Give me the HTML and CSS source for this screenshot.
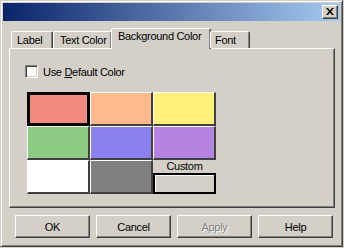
FILE: index.html
```html
<!DOCTYPE html>
<html lang="en">
<head>
    <meta charset="UTF-8">
    <title>Properties</title>
    <link rel="stylesheet" href="styles.css">
</head>
<body>
    <div class="window">
        <div class="titlebar">
            <button class="close-btn" aria-label="Close">
                <svg width="8" height="7" viewBox="0 0 8 7">
                    <path d="M0 0h2l2 2.5L6 0h2L5 3.5 8 7H6L4 4.5 2 7H0l3-3.5z" fill="#000"/>
                </svg>
            </button>
        </div>

        <div class="tabs">
            <div class="tab">Label</div>
            <div class="tab">Text Color</div>
            <div class="tab active">Background Color</div>
            <div class="tab">Font</div>
        </div>

        <div class="panel">
            <label class="check-row">
                <span class="checkbox"></span>
                <span>Use <u>D</u>efault Color</span>
            </label>

            <div class="swatches">
                <div class="swatch selected" style="background:#f28a80"></div>
                <div class="swatch" style="background:#ffb98a"></div>
                <div class="swatch" style="background:#fff07c"></div>
                <div class="swatch" style="background:#8ccc82"></div>
                <div class="swatch" style="background:#8a80f0"></div>
                <div class="swatch" style="background:#b682e2"></div>
                <div class="swatch" style="background:#ffffff"></div>
                <div class="swatch" style="background:#808080"></div>
                <div class="custom">
                    <div class="custom-label">Custom</div>
                    <div class="custom-box"></div>
                </div>
            </div>
        </div>

        <div class="buttons">
            <button class="btn">OK</button>
            <button class="btn">Cancel</button>
            <button class="btn disabled"><u>A</u>pply</button>
            <button class="btn">Help</button>
        </div>
    </div>
</body>
</html>
```

FILE: styles.css
```css
* {
    margin: 0;
    padding: 0;
    box-sizing: border-box;
}

body {
    background: #d4d0c8;
    font-family: "Liberation Sans", Arial, sans-serif;
    font-size: 11px;
    letter-spacing: -0.3px;
    color: #000;
}

.window {
    width: 343px;
    height: 247px;
    background: #d4d0c8;
    border: 1px solid;
    border-color: #d4d0c8 #404040 #404040 #d4d0c8;
    box-shadow: inset 1px 1px #fff, inset -1px -1px #808080;
    padding: 2px;
    display: flex;
    flex-direction: column;
}

.titlebar {
    height: 18px;
    background: linear-gradient(90deg, #0a246a, #a6caf0);
    display: flex;
    justify-content: flex-end;
    align-items: center;
    padding-right: 2px;
}

.close-btn {
    width: 16px;
    height: 14px;
    background: #d4d0c8;
    border: 1px solid;
    border-color: #fff #404040 #404040 #fff;
    box-shadow: inset -1px -1px #808080;
    display: flex;
    align-items: center;
    justify-content: center;
    padding-bottom: 1px;
}

.tabs {
    display: flex;
    align-items: flex-end;
    height: 20px;
    margin-top: 7px;
    padding-left: 8px;
    position: relative;
    z-index: 1;
}

.tab {
    height: 17px;
    padding: 2px 0 0 5px;
    border: 1px solid;
    border-bottom: none;
    border-color: #fff #404040 transparent #fff;
    box-shadow: inset -1px 0 #808080;
    border-radius: 2px 2px 0 0;
    white-space: nowrap;
}

.tab:nth-child(1) { width: 42px; }
.tab:nth-child(2) { width: 59px; padding-left: 6px; }
.tab:nth-child(4) { width: 40px; padding-left: 4px; }

.tab.active {
    height: 21px;
    width: 100px;
    margin: 0 -1px -1px -1px;
    padding: 1px 0 0 6px;
    background: #d4d0c8;
}

.panel {
    margin: 0 5px 0 6px;
    height: 160px;
    border: 1px solid;
    border-color: #fff #404040 #404040 #fff;
    box-shadow: inset -1px -1px #808080;
    padding: 16px 0 0 15px;
}

.check-row {
    display: flex;
    align-items: center;
    gap: 5px;
    height: 13px;
}

.checkbox {
    width: 13px;
    height: 13px;
    background: #fff;
    border: 1px solid;
    border-color: #808080 #fff #fff #808080;
    box-shadow: inset 1px 1px #404040, inset -1px -1px #d4d0c8;
}

.swatches {
    display: grid;
    grid-template-columns: repeat(3, 63px);
    grid-auto-rows: 34px;
    margin: 14px 0 0 2px;
}

.swatch {
    border-style: solid;
    border-width: 1px 2px 2px 1px;
    border-color: #fff #404040 #404040 #fff;
}

.swatch.selected {
    border: 3px solid #000;
}

.custom {
    display: flex;
    flex-direction: column;
}

.custom-label {
    height: 13px;
    line-height: 12px;
    text-align: center;
}

.custom-box {
    flex: 1;
    border: 2px solid #000;
    background: #d4d0c8;
    box-shadow: inset 1px 1px #fff;
}

.buttons {
    display: flex;
    gap: 6px;
    margin: 7px 0 0 12px;
}

.btn {
    width: 75px;
    height: 23px;
    font-family: inherit;
    font-size: 11px;
    letter-spacing: inherit;
    background: #d4d0c8;
    border: 1px solid;
    border-color: #fff #404040 #404040 #fff;
    box-shadow: inset -1px -1px #808080;
}

.btn u {
    text-decoration: none;
}

.btn.disabled {
    color: #808080;
    text-shadow: 1px 1px #fff;
}
```
